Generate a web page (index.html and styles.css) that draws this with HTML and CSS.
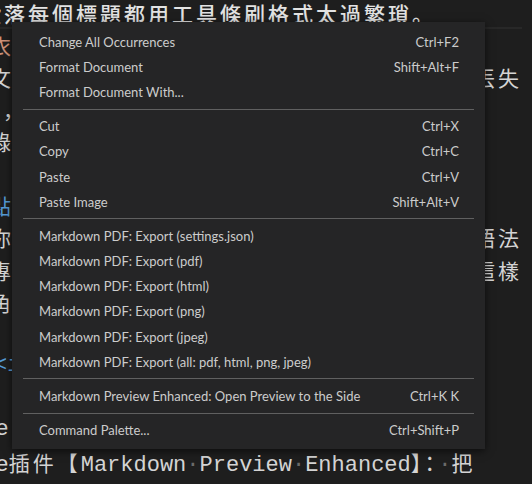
FILE: index.html
```html
<!DOCTYPE html>
<html>
<head>
<meta charset="utf-8">
<link rel="stylesheet" href="styles.css">
</head>
<body>
<div class="editor">
  <div class="line current"><span class="frag s-20 cjk">段落每個標題都用工具條刷格式太過繁瑣。</span></div>
  <div class="line"><span class="frag cjk str">衣</span></div>
  <div class="line"><span class="frag cjk">文</span><span class="cjk">丟失</span></div>
  <div class="line"><span class="frag s3 cjk">，</span></div>
  <div class="line"><span class="frag cjk">錄</span></div>
  <div class="line"></div>
  <div class="line"><span class="frag cjk kw">點</span></div>
  <div class="line"><span class="frag cjk">你</span><span class="cjk">語法</span></div>
  <div class="line"><span class="frag cjk">專</span><span class="cjk">這樣</span></div>
  <div class="line"><span class="frag cjk">角</span></div>
  <div class="line"></div>
  <div class="line"><span class="frag s-6 kw">&lt;i</span></div>
  <div class="line"></div>
  <div class="line"><span class="frag s-4">e</span></div>
  <div class="line"><span class="frag s-4">e<span class="cjk">插件【</span>Markdown<span class="ws">·</span>Preview<span class="ws">·</span>Enhanced<span class="cjk narrow">】：</span><span class="ws">·</span><span class="cjk">把</span></span></div>
</div>

<div class="menu">
  <div class="item"><span>Change All Occurrences</span><span>Ctrl+F2</span></div>
  <div class="item"><span>Format Document</span><span>Shift+Alt+F</span></div>
  <div class="item"><span>Format Document With...</span><span></span></div>
  <div class="sep"></div>
  <div class="item"><span>Cut</span><span>Ctrl+X</span></div>
  <div class="item"><span>Copy</span><span>Ctrl+C</span></div>
  <div class="item"><span>Paste</span><span>Ctrl+V</span></div>
  <div class="item"><span>Paste Image</span><span>Shift+Alt+V</span></div>
  <div class="sep"></div>
  <div class="item"><span>Markdown PDF: Export (settings.json)</span><span></span></div>
  <div class="item"><span>Markdown PDF: Export (pdf)</span><span></span></div>
  <div class="item"><span>Markdown PDF: Export (html)</span><span></span></div>
  <div class="item"><span>Markdown PDF: Export (png)</span><span></span></div>
  <div class="item"><span>Markdown PDF: Export (jpeg)</span><span></span></div>
  <div class="item"><span>Markdown PDF: Export (all: pdf, html, png, jpeg)</span><span></span></div>
  <div class="sep"></div>
  <div class="item"><span>Markdown Preview Enhanced: Open Preview to the Side</span><span>Ctrl+K K</span></div>
  <div class="sep"></div>
  <div class="item"><span>Command Palette...</span><span>Ctrl+Shift+P</span></div>
</div>
</body>
</html>
```
FILE: styles.css
```css
html, body {
  margin: 0;
  padding: 0;
  background: #1e1e1e;
  overflow: hidden;
  width: 532px;
  height: 484px;
}

.editor {
  width: 522px;
  margin-top: -3.5px;
  font-family: "Liberation Mono", "Noto Sans CJK JP", "Noto Sans CJK TC", monospace;
  font-size: 22px;
  color: #d4d4d4;
}

.line {
  display: flex;
  justify-content: space-between;
  height: 32.15px;
  line-height: 32.15px;
  white-space: pre;
  overflow: visible;
}

.line.current {
  box-shadow: inset 0 -2px 0 #282828;
}

.frag { margin-left: -10px; }
.frag.s-20 { margin-left: -20px; }
.frag.s-6 { margin-left: -6px; }
.frag.s-4 { margin-left: -4.5px; }
.frag.s3 { margin-left: 3px; }

.cjk {
  font-family: "Noto Sans CJK JP", "Noto Sans CJK TC", sans-serif;
  font-size: 21px;
  letter-spacing: 3px;
}
.line.current .cjk { font-weight: 500; color: #e2e2e2; }
.cjk.narrow { letter-spacing: -2px; }

.str { color: #ce9178; }
.kw { color: #569cd6; }
.ws { color: #6a6a6a; }

.menu {
  position: absolute;
  left: 12px;
  top: 22px;
  width: 473px;
  box-sizing: border-box;
  padding: 7px 0 6px;
  background: #252526;
  box-shadow: 0 2px 8px rgba(0, 0, 0, 0.6);
  font-family: "Lato", "Noto Sans", sans-serif;
  font-size: 13px;
  color: #cccccc;
}

.item {
  display: flex;
  justify-content: space-between;
  align-items: center;
  height: 25.2px;
  padding: 0 26px 0 27px;
  white-space: nowrap;
}

.sep {
  height: 1px;
  margin: 4px 11px;
  background: #606060;
}
```
